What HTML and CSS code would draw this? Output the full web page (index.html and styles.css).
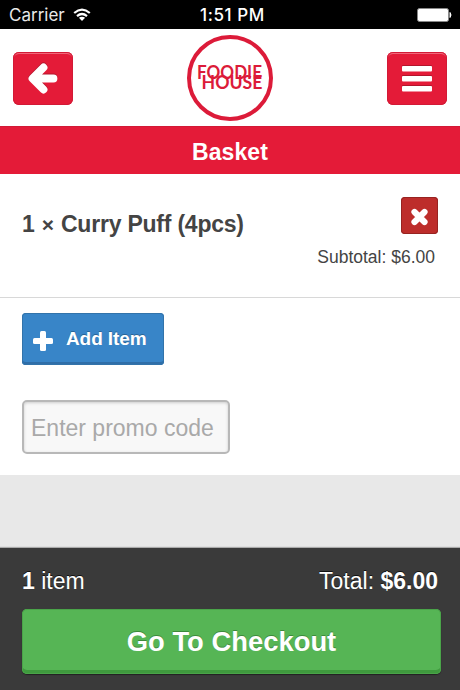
FILE: index.html
```html
<!DOCTYPE html>
<html lang="en">
<head>
    <meta charset="UTF-8">
    <meta name="viewport" content="width=device-width, initial-scale=1.0">
    <title>Foodie House - Basket</title>
    <link rel="stylesheet" href="styles.css">
</head>
<body>
<div class="status">
    <div class="carrier">
        <span>Carrier</span>
        <svg width="18" height="14" viewBox="0 0 18 14">
            <path d="M1.2 5 Q9 -1.8 16.8 5 M4 8.1 Q9 3.9 14 8.1" fill="none" stroke="#fff" stroke-width="2.2"/>
            <path d="M5.9 9.8 Q9 7.6 12.1 9.8 L9 13 Z" fill="#fff"/>
        </svg>
    </div>
    <span class="time">1:51 PM</span>
    <svg class="battery" width="36" height="14" viewBox="0 0 36 14">
        <rect x="1.5" y=".5" width="31" height="13" rx="2" fill="#fff" stroke="#888"/>
        <path d="M34 4.5 Q36 7 34 9.5 Z" fill="#fff" stroke="#fff"/>
    </svg>
</div>

<div class="header">
    <button class="nav" aria-label="Back">
        <svg width="60" height="52" viewBox="0 0 60 52">
            <path d="M30.5 14.5 L19.5 25.5 L30.5 36.5 M20.5 25.5 H40.5" fill="none" stroke="#fff" stroke-width="7.8" stroke-linecap="round" stroke-linejoin="round"/>
        </svg>
    </button>
    <svg class="logo" width="86" height="86" viewBox="0 0 86 86">
        <circle cx="43" cy="43" r="41" fill="#fff" stroke="#dc1b39" stroke-width="4"/>
        <text x="10" y="44" textLength="65" lengthAdjust="spacingAndGlyphs">FOODIE</text>
        <text x="14.5" y="54" textLength="61" lengthAdjust="spacingAndGlyphs">HOUSE</text>
    </svg>
    <button class="nav" aria-label="Menu">
        <svg width="60" height="52" viewBox="0 0 60 52" fill="#fff">
            <rect x="15" y="13" width="30" height="5.5" rx="1"/>
            <rect x="15" y="23" width="30" height="5.5" rx="1"/>
            <rect x="15" y="33" width="30" height="5.5" rx="1"/>
        </svg>
    </button>
</div>

<h1>Basket</h1>

<div class="item">
    <h2>1 <span class="times">×</span> Curry Puff (4pcs)</h2>
    <div class="price">
        <button class="remove" aria-label="Remove">
            <svg width="37" height="37" viewBox="0 0 37 37">
                <path d="M13.5 15 L23.5 25 M23.5 15 L13.5 25" stroke="#fff" stroke-width="6.2" stroke-linecap="round"/>
            </svg>
        </button>
        <span>Subtotal: $6.00</span>
    </div>
</div>

<div class="actions">
    <button class="add">
        <svg width="20" height="20" viewBox="0 0 20 20" fill="#fff">
            <rect x="7" y="0" width="6" height="20" rx="1.5"/>
            <rect x="0" y="7" width="20" height="6" rx="1.5"/>
        </svg>
        <span>Add Item</span>
    </button>
    <input class="promo" type="text" placeholder="Enter promo code">
</div>

<div class="footer">
    <div class="total">
        <span><b>1</b> item</span>
        <span>Total: <b>$6.00</b></span>
    </div>
    <button class="checkout">Go To Checkout</button>
</div>
</body>
</html>
```
FILE: styles.css
```css
* {
    box-sizing: border-box;
}

body {
    margin: 0;
    height: 690px;
    display: flex;
    flex-direction: column;
    background: #e8e8e8;
    font-family: "Liberation Sans", Arial, sans-serif;
    color: #444;
    overflow: hidden;
}

button {
    padding: 0;
    border: none;
    font-family: inherit;
    color: #fff;
}

svg {
    display: block;
}

/* status bar */
.status {
    height: 29px;
    padding: 1px 8px 0 9px;
    background: #000;
    color: #fff;
    display: grid;
    grid-template-columns: 1fr auto 1fr;
    align-items: center;
    font-family: Inter, sans-serif;
    font-size: 17px;
}

.carrier {
    display: flex;
    align-items: center;
    gap: 8px;
    color: #e8e8e8;
}

.time {
    margin-left: 4px;
    font-weight: 500;
    letter-spacing: .6px;
}

.battery {
    justify-self: end;
}

/* header */
.header {
    height: 97px;
    padding: 0 13px;
    background: #fff;
    display: flex;
    justify-content: space-between;
    align-items: center;
}

.nav {
    width: 60px;
    height: 53px;
    margin-top: 2px;
    background: #e41b38;
    border-radius: 6px;
    box-shadow: inset 0 0 0 1px #d21a36, inset 0 2px 0 #f0667a;
}

.nav svg {
    filter: drop-shadow(0 -1px 0 #b3152c);
}

.logo text {
    font-family: Lato, sans-serif;
    font-size: 18px;
    font-weight: bold;
    fill: #dc1b39;
}

h1 {
    height: 48px;
    margin: 0;
    background: #e41b38;
    border-top: 1px solid #d21a36;
    color: #fff;
    font-size: 23px;
    line-height: 51px;
    text-align: center;
    letter-spacing: .1px;
}

/* basket item */
.item {
    height: 124px;
    padding: 23px 22px 0;
    background: #fff;
    border-bottom: 1px solid #d8d8d8;
    display: flex;
    justify-content: space-between;
}

h2 {
    margin: 14px 0 0;
    font-size: 23px;
    line-height: 26px;
    letter-spacing: -.22px;
}

.times {
    margin: 0 1px;
    font-size: 21px;
}

.price {
    display: flex;
    flex-direction: column;
    align-items: flex-end;
    gap: 13px;
    margin-right: 3px;
    font-size: 17.5px;
    line-height: 20px;
}

.remove {
    width: 37px;
    height: 37px;
    margin-right: -3px;
    background: #bd2d2b;
    border-radius: 4px;
    box-shadow: inset 0 0 0 1px #972321;
}

/* add item and promo code */
.actions {
    height: 177px;
    padding: 15px 22px 0;
    background: #fff;
    display: flex;
    flex-direction: column;
    align-items: flex-start;
    gap: 35px;
}

.add {
    width: 142px;
    height: 52px;
    padding: 0 0 1px 11px;
    background: #3885c8;
    border-radius: 4px;
    box-shadow: inset 0 0 0 1px #3273aa, inset 0 -3px 0 #2f6ea8;
    display: flex;
    align-items: center;
    gap: 13px;
    font-size: 19px;
    font-weight: bold;
    letter-spacing: -.1px;
    text-shadow: 0 -1px 0 #2a6496;
}

.add svg {
    margin-top: 4px;
}

.promo {
    width: 208px;
    height: 54px;
    padding: 2px 8px 0;
    background: #f8f8f8;
    border: 2px solid #b8b8b8;
    border-radius: 5px;
    box-shadow: inset 0 1px 3px #ccc;
    font-family: inherit;
    font-size: 23px;
    text-indent: -1px;
}

.promo::placeholder {
    color: #a9a9a9;
}

/* footer */
.footer {
    height: 142px;
    margin-top: auto;
    padding: 19px 19px 0 22px;
    background: #3a3a3a;
    box-shadow: 0 -1px 1px #aaa;
}

.total {
    height: 42px;
    padding-right: 3px;
    display: flex;
    justify-content: space-between;
    color: #fff;
    font-size: 23px;
    line-height: 28px;
    text-shadow: 0 -1px 0 #111;
}

.checkout {
    display: block;
    width: 100%;
    height: 65px;
    background: #56b555;
    border-radius: 5px;
    box-shadow: inset 0 0 0 1px #4aa449, inset 0 -4px 0 #3f9a3e, 0 1px 1px #222;
    font-size: 27.4px;
    font-weight: bold;
    text-shadow: 0 -1px 0 #3c8a3b;
}
```
